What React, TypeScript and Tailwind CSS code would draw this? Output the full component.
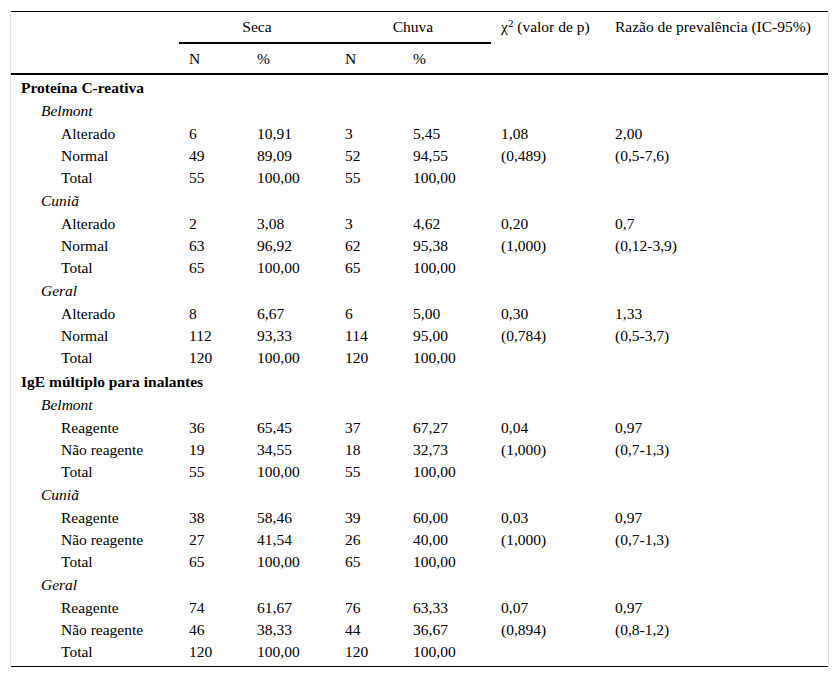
import React from "react";

type Row =
  | { kind: "bold"; label: string }
  | { kind: "ital"; label: string }
  | { kind: "data"; label: string; v: string[] };

const rows: Row[] = [
  { kind: "bold", label: "Proteína C-reativa" },
  { kind: "ital", label: "Belmont" },
  { kind: "data", label: "Alterado", v: ["6", "10,91", "3", "5,45", "1,08", "2,00"] },
  { kind: "data", label: "Normal", v: ["49", "89,09", "52", "94,55", "(0,489)", "(0,5-7,6)"] },
  { kind: "data", label: "Total", v: ["55", "100,00", "55", "100,00", "", ""] },
  { kind: "ital", label: "Cuniã" },
  { kind: "data", label: "Alterado", v: ["2", "3,08", "3", "4,62", "0,20", "0,7"] },
  { kind: "data", label: "Normal", v: ["63", "96,92", "62", "95,38", "(1,000)", "(0,12-3,9)"] },
  { kind: "data", label: "Total", v: ["65", "100,00", "65", "100,00", "", ""] },
  { kind: "ital", label: "Geral" },
  { kind: "data", label: "Alterado", v: ["8", "6,67", "6", "5,00", "0,30", "1,33"] },
  { kind: "data", label: "Normal", v: ["112", "93,33", "114", "95,00", "(0,784)", "(0,5-3,7)"] },
  { kind: "data", label: "Total", v: ["120", "100,00", "120", "100,00", "", ""] },
  { kind: "bold", label: "IgE múltiplo para inalantes" },
  { kind: "ital", label: "Belmont" },
  { kind: "data", label: "Reagente", v: ["36", "65,45", "37", "67,27", "0,04", "0,97"] },
  { kind: "data", label: "Não reagente", v: ["19", "34,55", "18", "32,73", "(1,000)", "(0,7-1,3)"] },
  { kind: "data", label: "Total", v: ["55", "100,00", "55", "100,00", "", ""] },
  { kind: "ital", label: "Cuniã" },
  { kind: "data", label: "Reagente", v: ["38", "58,46", "39", "60,00", "0,03", "0,97"] },
  { kind: "data", label: "Não reagente", v: ["27", "41,54", "26", "40,00", "(1,000)", "(0,7-1,3)"] },
  { kind: "data", label: "Total", v: ["65", "100,00", "65", "100,00", "", ""] },
  { kind: "ital", label: "Geral" },
  { kind: "data", label: "Reagente", v: ["74", "61,67", "76", "63,33", "0,07", "0,97"] },
  { kind: "data", label: "Não reagente", v: ["46", "38,33", "44", "36,67", "(0,894)", "(0,8-1,2)"] },
  { kind: "data", label: "Total", v: ["120", "100,00", "120", "100,00", "", ""] },
];

const cols = "grid grid-cols-[168px_68px_88px_68px_88px_114px_223px]";

export default function App() {
  return (
    <div
      className="min-h-[679px] w-[839px] bg-white text-[15.5px] text-black"
      style={{ fontFamily: '"Liberation Serif", "Times New Roman", serif' }}
    >
      <div className="ml-[10px] mt-[11px] w-[819px] border-x border-[#e2e2e2]">
        {/* Header */}
        <div className="border-t border-black">
          <div className={cols}>
            <div />
            <div className="col-span-2 h-[32px] border-b-2 border-black text-center leading-[30px]">
              Seca
            </div>
            <div className="col-span-2 h-[32px] border-b-2 border-black text-center leading-[30px]">
              Chuva
            </div>
            <div className="pl-[10px] leading-[30px] whitespace-nowrap">
              χ<sup className="text-[11px]">2</sup> (valor de p)
            </div>
            <div className="pl-[10px] leading-[30px] whitespace-nowrap">
              Razão de prevalência (IC-95%)
            </div>
          </div>
          <div className={cols + " h-[29px] leading-[29px]"}>
            <div />
            <div className="pl-[10px]">N</div>
            <div className="pl-[10px]">%</div>
            <div className="pl-[10px]">N</div>
            <div className="pl-[10px]">%</div>
            <div />
            <div />
          </div>
        </div>
        {/* Body */}
        <div className="border-t-2 border-b border-black pb-[3px]">
          {rows.map((r, i) => {
            if (r.kind === "bold")
              return (
                <div key={i} className="h-[24px] pl-[10px] pt-[1px] font-bold leading-[24px] whitespace-nowrap">
                  {r.label}
                </div>
              );
            if (r.kind === "ital")
              return (
                <div key={i} className="h-[24px] pl-[30px] italic leading-[24px]">
                  {r.label}
                </div>
              );
            return (
              <div key={i} className={cols + " h-[22px] leading-[21px]"}>
                <div className="pl-[50px] whitespace-nowrap">{r.label}</div>
                {r.v.map((x, j) => (
                  <div key={j} className="pl-[10px] whitespace-nowrap">
                    {x}
                  </div>
                ))}
              </div>
            );
          })}
        </div>
      </div>
    </div>
  );
}
